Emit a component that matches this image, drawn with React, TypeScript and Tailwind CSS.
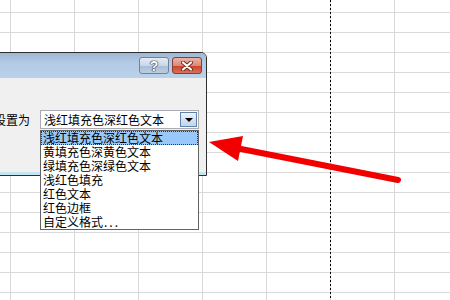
import React from "react";

const options = [
  "浅红填充色深红色文本",
  "黄填充色深黄色文本",
  "绿填充色深绿色文本",
  "浅红色填充",
  "红色文本",
  "红色边框",
  "自定义格式",
];

const font = { fontFamily: '"Noto Sans CJK SC", "Liberation Sans", sans-serif' };

const CloseGlyph = () => (
  <svg width="14" height="10" viewBox="0 0 14 10">
    <path d="M3 1.5 L11 8.5 M11 1.5 L3 8.5" stroke="#6b2a20" strokeWidth="4" strokeLinecap="round" />
    <path d="M3 1.5 L11 8.5 M11 1.5 L3 8.5" stroke="#ffffff" strokeWidth="2.2" strokeLinecap="round" />
  </svg>
);

const App = () => {
  return (
    <div
      className="relative w-[450px] h-[300px] overflow-hidden bg-white bg-[linear-gradient(to_right,#d9d9d9_1px,transparent_1px),linear-gradient(to_bottom,#d9d9d9_1px,transparent_1px)] bg-[size:64px_20px] bg-[position:10px_12px]"
      style={font}
    >
      {/* page break */}
      <div className="absolute left-[330px] top-0 w-px h-full bg-[repeating-linear-gradient(to_bottom,#000_0_2px,transparent_2px_4px)]" />

      {/* dialog */}
      <div className="absolute left-[-100px] top-[52px] w-[307px] h-[124px] flex flex-col border border-[#2e2e2e] rounded-tr-[6px] overflow-hidden bg-[#eef2f6]">
        <div className="h-[25px] flex justify-end items-start gap-[3px] pt-[4px] pr-[4px] bg-[linear-gradient(to_bottom,#9fb7d4,#b4cbe6_40%,#bad1ea)]">
          <div className="w-[30px] h-[17px] rounded-[3px] border border-[#6f829a] bg-[linear-gradient(to_bottom,#e4ecf5,#c9d7e7_50%,#a9bdd5_51%,#bccde2)] flex items-center justify-center">
            <span
              className="text-[14px] leading-none font-bold text-white [text-shadow:0_0_1px_#2c3a4c,0_0_1px_#2c3a4c,0_0_1px_#2c3a4c,0_0_1px_#2c3a4c]"
              style={{ fontFamily: '"Liberation Sans", sans-serif' }}
            >
              ?
            </span>
          </div>
          <div className="w-[30px] h-[17px] rounded-[3px] border border-[#8c3b2f] bg-[linear-gradient(to_bottom,#eab2a5,#dc8b78_50%,#c8412c_51%,#d8725a)] flex items-center justify-center">
            <CloseGlyph />
          </div>
        </div>
        <div className="flex-1 bg-[#f0f0f0] border-b-[3px] border-[#c4e6f2]">
          <div className="flex items-center justify-end pr-[7px] pt-[32px]">
            <span className="text-[12px] leading-[14px] text-black mr-[10px]">设置为</span>
            <div className="w-[159px] h-[19px] border border-[#a9adb3] bg-white flex items-center pl-[3px] pr-[1px]">
              <span className="flex-1 text-[12px] leading-[14px] text-black">浅红填充色深红色文本</span>
              <div className="w-[17px] h-[15px] border border-[#5f83ab] bg-[linear-gradient(to_bottom,#eef4fb,#d4e2f2_50%,#c3d6ec)] flex items-center justify-center">
                <div className="w-0 h-0 border-x-[4px] border-x-transparent border-t-[4px] border-t-black" />
              </div>
            </div>
          </div>
        </div>
      </div>

      {/* dropdown list */}
      <div className="absolute left-[40px] top-[130px] w-[159px] h-[100px] border border-[#646464] bg-white">
        {options.map((opt, i) => (
          <div
            key={opt}
            className={`h-[14px] leading-[14px] text-[12px] text-black pl-[2px] whitespace-nowrap ${
              i === 0 ? "bg-[#99c9fa] outline-1 outline-dotted outline-[#333] -outline-offset-1" : ""
            }`}
          >
            {opt}
            {i === options.length - 1 && <span className="tracking-[2px] pl-[1px]">...</span>}
          </div>
        ))}
      </div>

      {/* red arrow */}
      <svg className="absolute left-0 top-0 pointer-events-none" width="450" height="300">
        <line x1="236" y1="148" x2="398" y2="180" stroke="#f20000" strokeWidth="6" strokeLinecap="round" />
        <polygon points="209,142 243,136 238,161" fill="#f20000" />
      </svg>
    </div>
  );
};

export default App;
